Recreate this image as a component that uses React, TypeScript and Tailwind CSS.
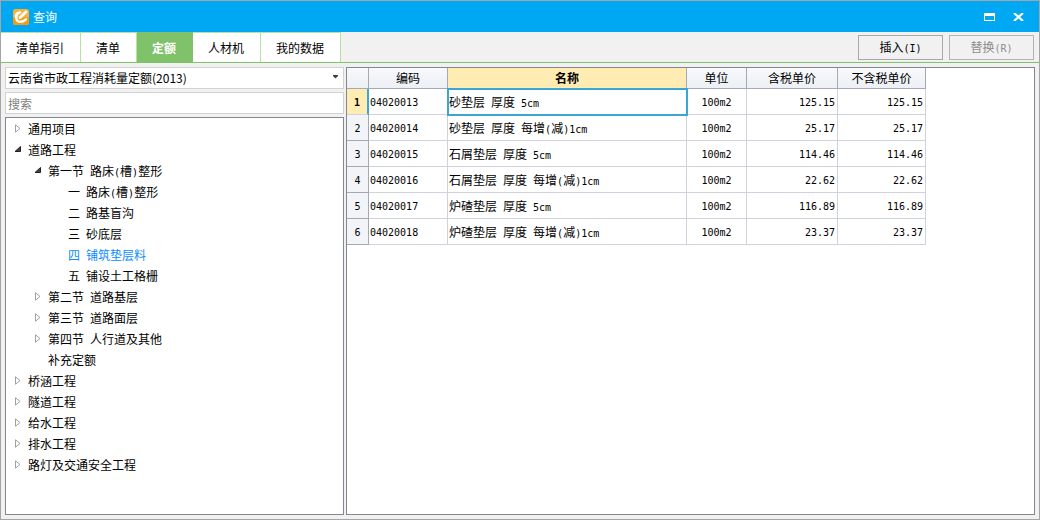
import { Fragment, useState } from "react";
import clsx from "clsx";

type TreeNode = {
  label: string;
  open?: boolean;
  children?: TreeNode[];
};

type Quota = {
  code: string;
  name: string;
  unit: string;
  taxed: string;
  untaxed: string;
};

const TABS = ["清单指引", "清单", "定额", "人材机", "我的数据"];

const TREE: TreeNode[] = [
  { label: "通用项目", children: [] },
  {
    label: "道路工程",
    open: true,
    children: [
      {
        label: "第一节 路床(槽)整形",
        open: true,
        children: [
          { label: "一 路床(槽)整形" },
          { label: "二 路基盲沟" },
          { label: "三 砂底层" },
          { label: "四 铺筑垫层料" },
          { label: "五 铺设土工格栅" },
        ],
      },
      { label: "第二节 道路基层", children: [] },
      { label: "第三节 道路面层", children: [] },
      { label: "第四节 人行道及其他", children: [] },
      { label: "补充定额" },
    ],
  },
  { label: "桥涵工程", children: [] },
  { label: "隧道工程", children: [] },
  { label: "给水工程", children: [] },
  { label: "排水工程", children: [] },
  { label: "路灯及交通安全工程", children: [] },
];

const QUOTAS: Quota[] = [
  { code: "04020013", name: "砂垫层 厚度 5cm", unit: "100m2", taxed: "125.15", untaxed: "125.15" },
  { code: "04020014", name: "砂垫层 厚度 每增(减)1cm", unit: "100m2", taxed: "25.17", untaxed: "25.17" },
  { code: "04020015", name: "石屑垫层 厚度 5cm", unit: "100m2", taxed: "114.46", untaxed: "114.46" },
  { code: "04020016", name: "石屑垫层 厚度 每增(减)1cm", unit: "100m2", taxed: "22.62", untaxed: "22.62" },
  { code: "04020017", name: "炉碴垫层 厚度 5cm", unit: "100m2", taxed: "116.89", untaxed: "116.89" },
  { code: "04020018", name: "炉碴垫层 厚度 每增(减)1cm", unit: "100m2", taxed: "23.37", untaxed: "23.37" },
];

const HEAD = "h-[21px] border-r border-b border-[#a3a9b5] p-0 text-center font-normal";
const CELL = "h-[26px] border-r border-b border-[#cfd1dc] py-0 whitespace-nowrap";
const LATIN = "font-['DejaVu_Sans_Mono',monospace] text-[10px] leading-none";

// latin runs are half the width of a chinese character
const Mixed = ({ text }: { text: string }) => (
  <>
    {text.split(/([\x20-\x7e]+)/).map((part, i) =>
      i % 2 ? (
        <span key={i} className={clsx(LATIN, "whitespace-pre")}>
          {part}
        </span>
      ) : (
        <Fragment key={i}>{part}</Fragment>
      )
    )}
  </>
);

const Logo = () => (
  <svg width="16" height="16" viewBox="0 0 16 16" aria-hidden="true">
    <rect width="16" height="16" rx="2.5" fill="#fbb03a" />
    <path d="M0 8h16v5.500a2.500 2.500 0 0 1-2.500 2.500h-11A2.500 2.500 0 0 1 0 13.500z" fill="#f89a14" />
    <path
      d="M7.500 2L3 3.500 1.500 7l1.300 5 2.700 2 4.500-.3 3.500-2.200.7-2.500-2.200.5-2 1.500-3.500.8-1.700-1.300L4.500 8l.6-2.300L8.500 3.800z"
      fill="#fff"
    />
    <path d="M12.800 1.200l2 1.600-6.300 6.700-2.800.8.300-2.900z" fill="#fff" />
  </svg>
);

const Arrow = ({ open }: { open: boolean }) => (
  <svg width="8" height="9" viewBox="0 0 8 9" aria-hidden="true">
    {open ? (
      <path d="M6.500 1.500v5h-5.500z" fill="#444" stroke="#222" strokeWidth="1" />
    ) : (
      <path d="M1.500 0.800v7.400l4.500-3.700z" fill="#fff" stroke="#a0a0a0" strokeWidth="1" />
    )}
  </svg>
);

type BranchProps = {
  node: TreeNode;
  selected: string;
  onSelect: (label: string) => void;
};

const Branch = ({ node, selected, onSelect }: BranchProps) => {
  const [open, setOpen] = useState(!!node.open);

  return (
    <li>
      <div className="flex h-[21px] items-center">
        {node.children ? (
          <button
            className="flex w-5 justify-center"
            aria-label={open ? "收起" : "展开"}
            onClick={() => setOpen(!open)}
          >
            <Arrow open={open} />
          </button>
        ) : (
          <span className="w-5" />
        )}
        <button
          className={clsx("whitespace-nowrap", selected === node.label && "text-[#0a8cff]")}
          onClick={() => onSelect(node.label)}
        >
          <Mixed text={node.label} />
        </button>
      </div>
      {open && node.children && (
        <ul className="pl-5">
          {node.children.map((child) => (
            <Branch key={child.label} node={child} selected={selected} onSelect={onSelect} />
          ))}
        </ul>
      )}
    </li>
  );
};

const QuotaTable = () => (
  <table className="w-[579px] table-fixed border-separate border-spacing-0">
    <colgroup>
      <col className="w-[22px]" />
      <col className="w-[79px]" />
      <col className="w-[239px]" />
      <col className="w-[60px]" />
      <col className="w-[91px]" />
      <col className="w-[88px]" />
    </colgroup>
    <thead className="bg-linear-to-b from-[#f8f9fb] to-[#eceff4]">
      <tr>
        <th className={HEAD} />
        <th className={HEAD}>编码</th>
        <th className="h-[21px] border-r border-b border-[#a3a9b5] bg-[#ffecb3] p-0 text-center font-bold">
          名称
        </th>
        <th className={HEAD}>单位</th>
        <th className={HEAD}>含税单价</th>
        <th className={HEAD}>不含税单价</th>
      </tr>
    </thead>
    <tbody>
      {QUOTAS.map((q, i) => (
        <tr key={q.code}>
          <th
            className={clsx(
              LATIN,
              "h-[26px] border-b px-0 pt-[2px] pb-0 text-center",
              i === 0
                ? "border-r-2 border-r-[#3ba5d3] border-b-[#cfd1dc] bg-[#ffecb3] font-bold"
                : "border-r border-[#a3a9b5] bg-[#f2f4f8] font-normal"
            )}
          >
            {i + 1}
          </th>
          <td className={clsx(CELL, LATIN, "pt-[2px] pr-0 pl-px")}>{q.code}</td>
          <td
            className={clsx(
              CELL,
              "pr-0 pl-px",
              i === 0 && "relative outline-2 -outline-offset-1 outline-[#3ba5d3]"
            )}
          >
            <Mixed text={q.name} />
          </td>
          <td className={clsx(CELL, LATIN, "px-0 pt-[2px] text-center")}>{q.unit}</td>
          <td className={clsx(CELL, LATIN, "pt-[2px] pr-[2px] pl-0 text-right")}>{q.taxed}</td>
          <td className={clsx(CELL, LATIN, "pt-[2px] pr-[2px] pl-0 text-right")}>{q.untaxed}</td>
        </tr>
      ))}
    </tbody>
  </table>
);

const App = () => {
  const [tab, setTab] = useState("定额");
  const [selected, setSelected] = useState("四 铺筑垫层料");

  return (
    <div className="flex h-screen flex-col border border-[#a5a5a5] bg-[#f1f1f1] font-['Noto_Sans_CJK_SC',sans-serif] text-xs leading-4 text-black">
      <header className="flex h-[31px] shrink-0 items-center bg-[#00a8f3] pr-[11px] pl-3 text-white">
        <Logo />
        <h1 className="ml-1 flex-1">查询</h1>
        <button aria-label="最大化" className="px-1">
          <svg width="11" height="8" viewBox="0 0 11 8">
            <path d="M0 0h11v8H0zM1 3v4h9V3z" fill="#fff" fillRule="evenodd" />
          </svg>
        </button>
        <button aria-label="关闭" className="ml-[10px] px-1">
          <svg width="11" height="8" viewBox="0 0 11 8">
            <path d="M1 0l9 8M10 0L1 8" stroke="#fff" strokeWidth="2.2" />
          </svg>
        </button>
      </header>

      <nav className="flex h-[31px] shrink-0 border-b border-[#80c269] pr-[5px]">
        {TABS.map((name) => (
          <button
            key={name}
            onClick={() => setTab(name)}
            className={clsx(
              "border-t border-r pr-4 pl-[15px] whitespace-nowrap",
              tab === name
                ? "border-[#80c269] bg-[#80c269] font-bold text-white"
                : "border-[#b5e3a0] bg-white"
            )}
          >
            {name}
          </button>
        ))}
        <div className="ml-auto flex items-center gap-[6px]">
          <button className="h-[25px] w-[85px] border border-[#a8a8a8]">
            <Mixed text="插入(I)" />
          </button>
          <button disabled className="h-[25px] w-[85px] border border-[#b4b4b4] text-[#8c8c8c]">
            <Mixed text="替换(R)" />
          </button>
        </div>
      </nav>

      <main className="flex min-h-0 flex-1 gap-[2px] p-1">
        <aside className="flex w-[339px] shrink-0 flex-col">
          <div className="relative">
            <select
              aria-label="定额库"
              className="block h-[22px] w-full appearance-none border border-[#d2d2d2] bg-white pl-[2px]"
            >
              <option>云南省市政工程消耗量定额(2013)</option>
            </select>
            <svg
              className="pointer-events-none absolute top-2 right-[6px]"
              width="5"
              height="4"
              viewBox="0 0 5 4"
            >
              <path d="M0 0h5v1L2.500 3.500 0 1z" fill="#404040" />
            </svg>
          </div>
          <input
            type="text"
            aria-label="搜索"
            placeholder="搜索"
            className="mt-[3px] h-[22px] w-full border border-[#d2d2d2] bg-white pl-[2px] placeholder:text-[#808080]"
          />
          <ul className="mt-[3px] min-h-0 flex-1 overflow-auto border border-[#828790] bg-white pl-[2px]">
            {TREE.map((node) => (
              <Branch key={node.label} node={node} selected={selected} onSelect={setSelected} />
            ))}
          </ul>
        </aside>
        <section className="min-w-0 flex-1 overflow-auto border border-[#828790] bg-white">
          <QuotaTable />
        </section>
      </main>
    </div>
  );
};

export default App;
